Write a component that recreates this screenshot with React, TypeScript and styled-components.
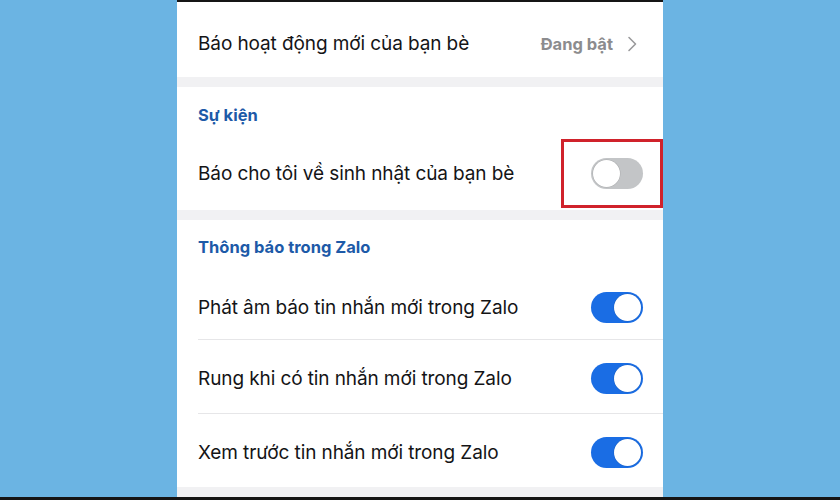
import React from "react";
import styled, { createGlobalStyle } from "styled-components";

const Global = createGlobalStyle`
  html, body { margin: 0; padding: 0; }
  body {
    width: 840px;
    height: 500px;
    overflow: hidden;
    background: #6bb4e3;
    font-family: Inter, "Noto Sans", sans-serif;
  }
`;

const Page = styled.div`
  width: 840px;
  height: 500px;
  box-sizing: border-box;
  display: flex;
  justify-content: center;
  border-bottom: 3px solid #151515;
`;

const Panel = styled.div`
  width: 486px;
  background: #ffffff;
  display: flex;
  flex-direction: column;
  border-top: 2px solid #151515;
  overflow: hidden;
`;

const Gap = styled.div`
  height: 10px;
  flex: none;
  background: #f1f1f3;
`;

const SectionTitle = styled.div<{ $h: number }>`
  height: ${(p) => p.$h}px;
  flex: none;
  display: flex;
  align-items: center;
  padding-left: 21px;
  padding-top: 2px;
  box-sizing: border-box;
  color: #1d5aa8;
  font-weight: 700;
  font-size: 16.5px;
`;

const Row = styled.div<{ $h: number; $divider?: boolean; $pt?: number; $pb?: number }>`
  height: ${(p) => p.$h}px;
  flex: none;
  display: flex;
  align-items: center;
  justify-content: space-between;
  margin-left: 21px;
  padding-right: 20px;
  padding-top: ${(p) => p.$pt ?? 0}px;
  padding-bottom: ${(p) => p.$pb ?? 0}px;
  box-sizing: border-box;
  border-bottom: ${(p) => (p.$divider ? "1px solid #e6e6e8" : "none")};
`;

const Label = styled.span`
  font-size: 19px;
  color: #141416;
  letter-spacing: -0.1px;
`;

const Trailing = styled.div`
  display: flex;
  align-items: center;
  gap: 14px;
  margin-right: 6px;
`;

const Value = styled.span`
  font-size: 16.5px;
  font-weight: 700;
  color: #8c8c8e;
`;

const Highlight = styled.div`
  position: relative;
  display: flex;
  align-items: center;
`;

const RedBox = styled.div`
  position: absolute;
  left: -30px;
  right: -20px;
  top: -19px;
  bottom: -19px;
  border: 3px solid #d0222b;
`;

const Track = styled.div<{ $on: boolean }>`
  width: 52px;
  height: 31px;
  border-radius: 16px;
  background: ${(p) => (p.$on ? "#1a6de4" : "#c3c5c7")};
  position: relative;
  flex: none;
`;

const Knob = styled.div<{ $on: boolean }>`
  position: absolute;
  top: 2px;
  left: ${(p) => (p.$on ? "23px" : "2px")};
  width: 27px;
  height: 27px;
  border-radius: 50%;
  background: #ffffff;
  box-shadow: 0 0 0 0.5px rgba(0, 0, 0, 0.12);
`;

const Toggle = ({ on }: { on: boolean }) => (
  <Track $on={on}>
    <Knob $on={on} />
  </Track>
);

const Chevron = () => (
  <svg width="10" height="16" viewBox="0 0 10 16">
    <path d="M2 1.5 L8.5 8 L2 14.5" fill="none" stroke="#9a9a9c" strokeWidth="1.6" strokeLinecap="round" strokeLinejoin="round" />
  </svg>
);

export default function App() {
  return (
    <>
      <Global />
      <Page>
        <Panel>
          <Row $h={75} $pt={8}>
            <Label>Báo hoạt động mới của bạn bè</Label>
            <Trailing>
              <Value>Đang bật</Value>
              <Chevron />
            </Trailing>
          </Row>
          <Gap />
          <SectionTitle $h={53}>Sự kiện</SectionTitle>
          <Row $h={70} $pb={4}>
            <Label>Báo cho tôi về sinh nhật của bạn bè</Label>
            <Highlight>
              <RedBox />
              <Toggle on={false} />
            </Highlight>
          </Row>
          <Gap />
          <SectionTitle $h={52}>Thông báo trong Zalo</SectionTitle>
          <Row $h={68} $divider $pt={3}>
            <Label>Phát âm báo tin nhắn mới trong Zalo</Label>
            <Toggle on />
          </Row>
          <Row $h={74} $divider $pt={4}>
            <Label>Rung khi có tin nhắn mới trong Zalo</Label>
            <Toggle on />
          </Row>
          <Row $h={73} $pt={3}>
            <Label>Xem trước tin nhắn mới trong Zalo</Label>
            <Toggle on />
          </Row>
          <Gap />
        </Panel>
      </Page>
    </>
  );
}
